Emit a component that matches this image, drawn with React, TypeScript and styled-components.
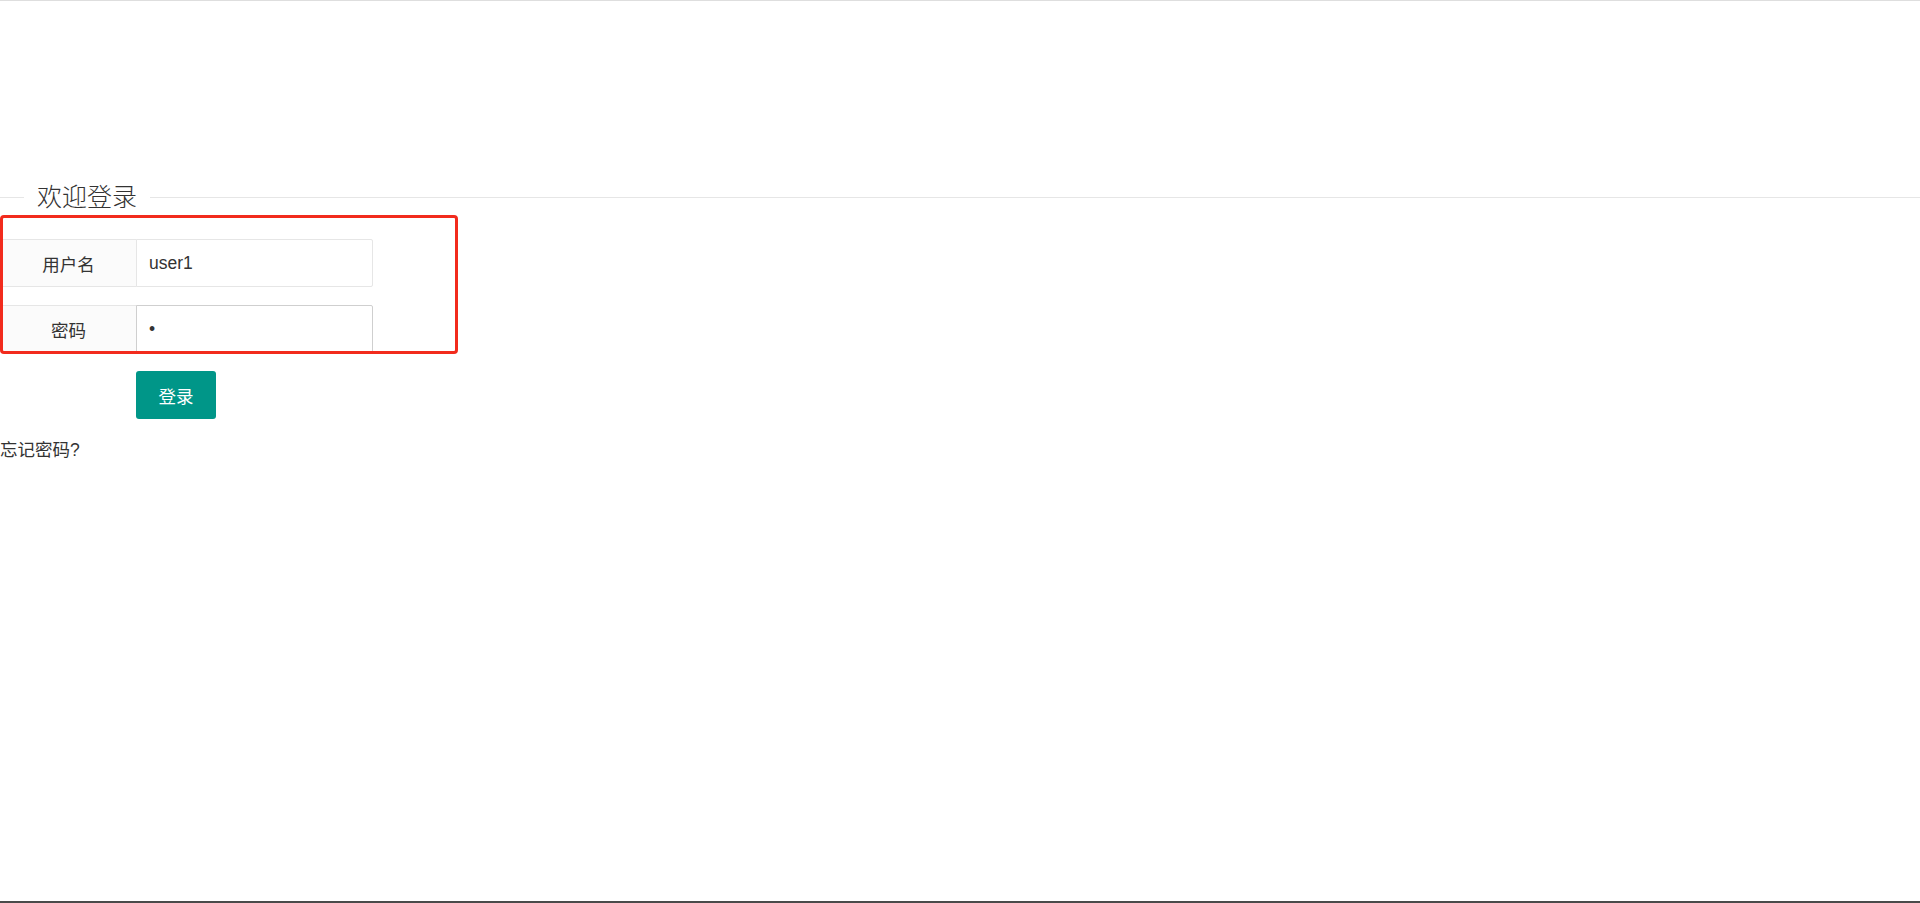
import styled, { createGlobalStyle } from 'styled-components';

const GlobalStyle = createGlobalStyle`
	html, body {
		margin: 0;
		padding: 0;
		background: #fff;
	}
	body {
		font-family: "Liberation Sans", "Noto Sans CJK SC", sans-serif;
		color: #333;
	}
	* {
		box-sizing: border-box;
	}
`;

const Page = styled.div`
	min-height: 100vh;
	border-top: 1px solid #dedede;
	border-bottom: 2px solid #4a4a4a;
`;

const TitleField = styled.fieldset`
	margin: 181px 0 0;
	padding: 0;
	border: none;
	border-top: 1px solid #e6e6e6;
	min-width: 0;
`;

const Legend = styled.legend`
	margin-left: 24px;
	padding: 0 13px;
	font-size: 25px;
	line-height: 30px;
	font-weight: 300;
	color: #333;
`;

const Form = styled.form`
	margin-top: 27px;
`;

const Fields = styled.div`
	position: relative;
	display: flex;
	flex-direction: column;
	gap: 18px;
	width: 458px;
`;

const Marker = styled.div`
	position: absolute;
	top: -24px;
	left: 0;
	right: 0;
	bottom: -1px;
	border: 3px solid #f22b1d;
	border-radius: 4px;
	pointer-events: none;
`;

const FormItem = styled.div`
	display: flex;
	height: 48px;
`;

const Label = styled.label`
	display: flex;
	align-items: center;
	justify-content: center;
	width: 137px;
	height: 100%;
	background: #fbfbfb;
	border: 1px solid #e6e6e6;
	border-radius: 2px 0 0 2px;
	font-size: 17.5px;
	color: #333;
`;

const Input = styled.input<{ $hover?: boolean }>`
	width: 237px;
	height: 100%;
	margin-left: -1px;
	padding: 0 12px;
	border: 1px solid ${({ $hover }) => ($hover ? '#cfcfcf' : '#e6e6e6')};
	border-radius: 0 2px 2px 0;
	background: #fff;
	outline: none;
	font-family: "Liberation Sans", "Noto Sans CJK SC", sans-serif;
	font-size: 17.5px;
	color: #333;
`;

const ButtonRow = styled.div`
	margin-top: 18px;
	padding-left: 136px;
`;

const Button = styled.button`
	width: 80px;
	height: 48px;
	border: none;
	border-radius: 3px;
	background: #009688;
	color: #fff;
	font-family: "Liberation Sans", "Noto Sans CJK SC", sans-serif;
	font-size: 17.5px;
	cursor: pointer;
`;

const Forgot = styled.a`
	display: block;
	margin-top: 18px;
	line-height: 26px;
	font-size: 17.5px;
	color: #333;
	text-decoration: none;
`;

const App = () => {
	return (
		<Page>
			<GlobalStyle />
			<TitleField>
				<Legend>欢迎登录</Legend>
			</TitleField>
			<Form onSubmit={e => e.preventDefault()}>
				<Fields>
					<FormItem>
						<Label>用户名</Label>
						<Input type="text" defaultValue="user1" />
					</FormItem>
					<FormItem>
						<Label>密码</Label>
						<Input type="password" defaultValue="1" $hover />
					</FormItem>
					<Marker />
				</Fields>
				<ButtonRow>
					<Button type="submit">登录</Button>
				</ButtonRow>
				<Forgot href="#">忘记密码?</Forgot>
			</Form>
		</Page>
	)
}

export default App
